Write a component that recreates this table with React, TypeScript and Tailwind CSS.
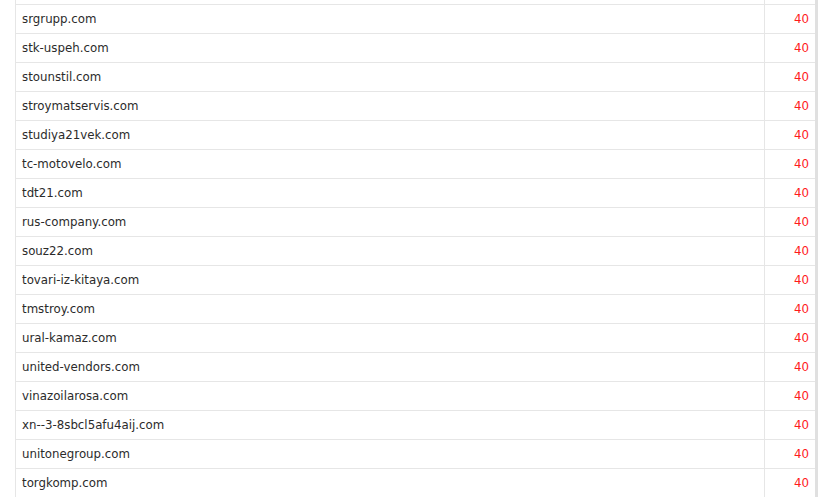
const domains = [
  "srgrupp.com",
  "stk-uspeh.com",
  "stounstil.com",
  "stroymatservis.com",
  "studiya21vek.com",
  "tc-motovelo.com",
  "tdt21.com",
  "rus-company.com",
  "souz22.com",
  "tovari-iz-kitaya.com",
  "tmstroy.com",
  "ural-kamaz.com",
  "united-vendors.com",
  "vinazoilarosa.com",
  "xn--3-8sbcl5afu4aij.com",
  "unitonegroup.com",
  "torgkomp.com",
];

export default function App() {
  return (
    <div className="w-[828px] h-[497px] overflow-hidden bg-white" style={{ fontFamily: '"DejaVu Sans", Verdana, sans-serif' }}>
      <div className="ml-[15px] w-[803px] border-l border-r-[3px] border-l-[#e6e6e6] border-r-[#e0e0e0]">
        <div className="flex h-[5px] border-b border-[#e6e6e6]">
          <div className="flex-1" />
          <div className="w-[51px] border-l border-[#e6e6e6]" />
        </div>
        {domains.map((d) => (
          <div key={d} className="flex h-[29px] border-b border-[#e6e6e6] text-[11.8px] leading-[28px]">
            <div className="flex-1 pl-[6px] text-[#2b2b2b]">{d}</div>
            <div className="w-[51px] border-l border-[#e6e6e6] pr-[6px] text-right text-[#ff1a1a]">40</div>
          </div>
        ))}
      </div>
    </div>
  );
}
